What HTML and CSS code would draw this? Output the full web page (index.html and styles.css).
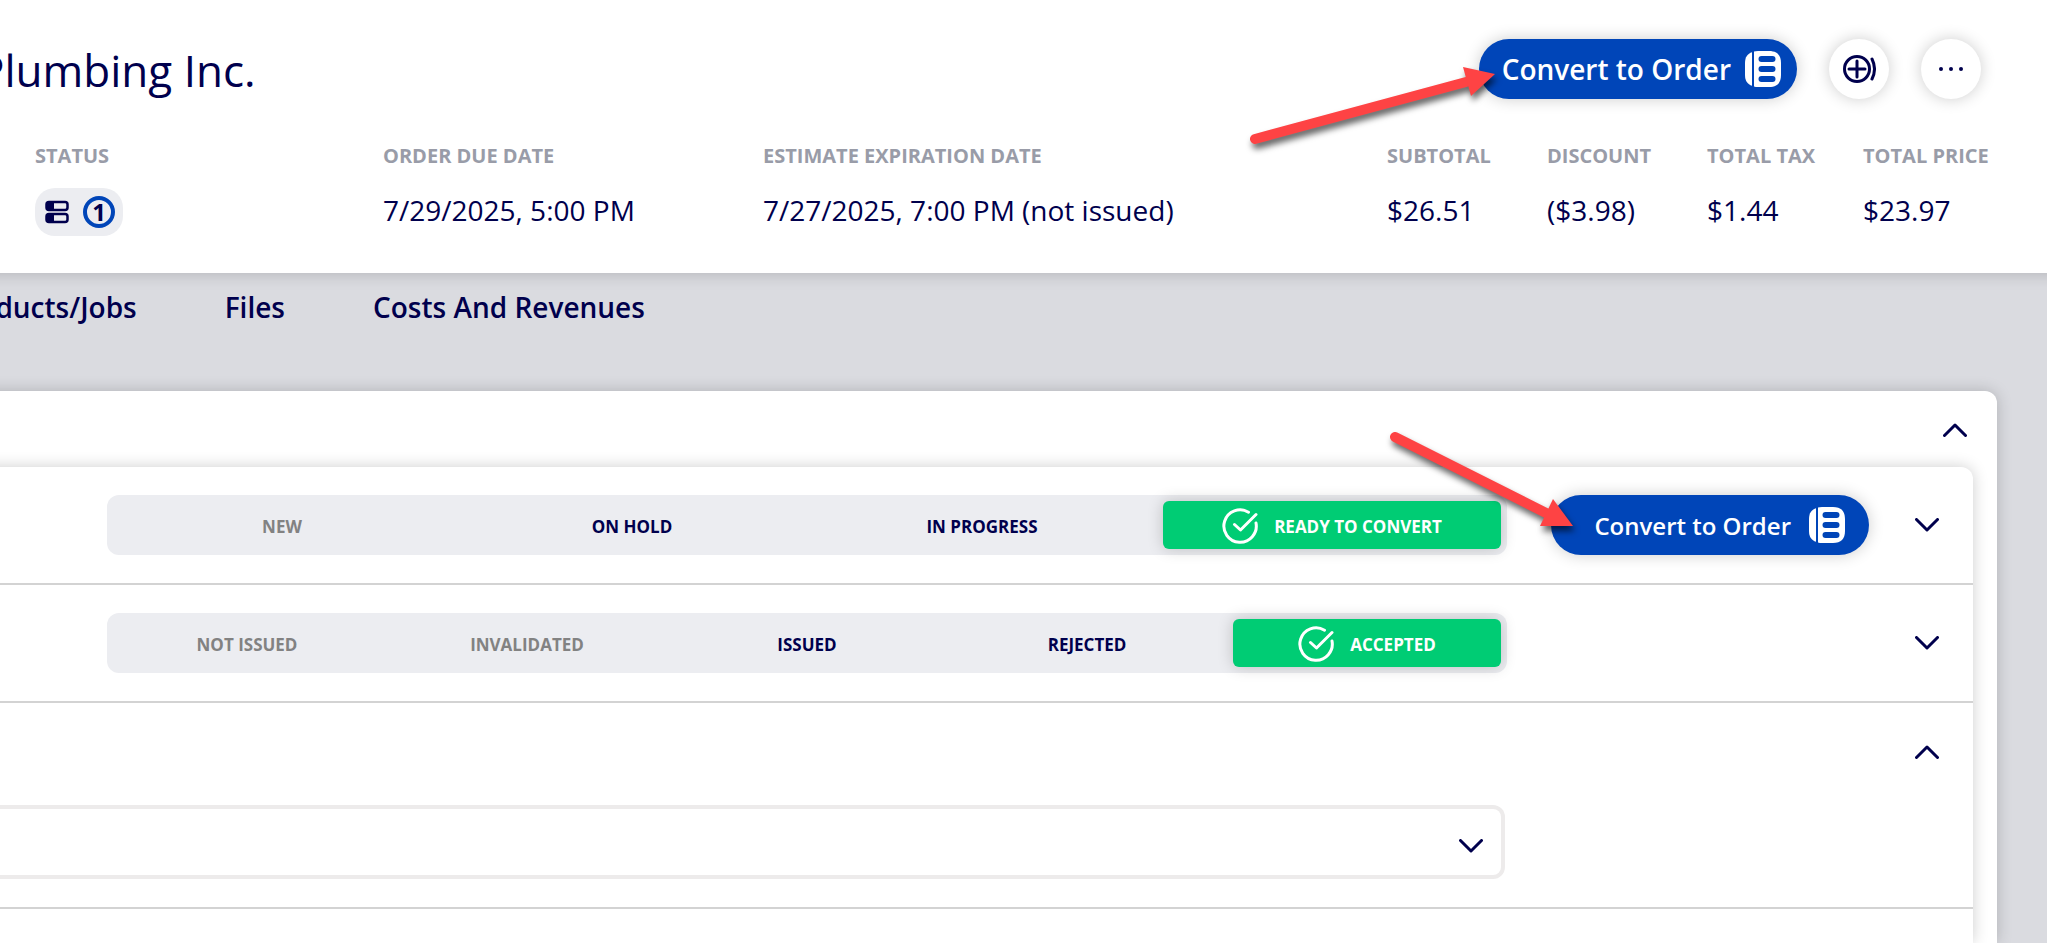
FILE: index.html
```
<!DOCTYPE html>
<html lang="en">
<head>
    <meta charset="UTF-8">
    <meta name="viewport" content="width=device-width, initial-scale=1.0">
    <title>Estimate - Plumbing Inc.</title>
    <link rel="stylesheet" href="styles.css">
</head>
<body>
    <!-- shared icons -->
    <svg class="sprite" aria-hidden="true">
        <symbol id="icon-order" viewBox="0 0 36 36">
            <path fill="#fff" d="M7 1.2V34.8C2.600 33.400 0 30 0 24V12C0 6 2.600 2.600 7 1.200Z"/>
            <path fill="#fff" fill-rule="evenodd" d="M9 .5Q10.500 0 13 0H24C32 0 36 4 36 12V24C36 32 32 36 24 36H13Q10.500 36 9 35.500ZM16.500 5A3 3 0 0 0 16.500 11H27.500A3 3 0 0 0 27.500 5ZM16.500 15A3 3 0 0 0 16.500 21H27.500A3 3 0 0 0 27.500 15ZM16.500 25A3 3 0 0 0 16.500 31H27.500A3 3 0 0 0 27.500 25Z"/>
        </symbol>
        <symbol id="icon-check" viewBox="0 0 36 36">
            <g fill="none" stroke="#fff" stroke-width="3" stroke-linecap="round">
                <path d="M26.500 4.200A16.200 16.200 0 1 0 34 15"/>
                <path stroke-linejoin="round" d="M12.500 16.500L18.500 22L34 6.500"/>
            </g>
        </symbol>
        <symbol id="icon-down" viewBox="0 0 24 14">
            <path fill="none" stroke="#00004d" stroke-width="3" stroke-linecap="round" stroke-linejoin="round" d="M1.500 1.500L12 12L22.500 1.500"/>
        </symbol>
        <symbol id="icon-up" viewBox="0 0 24 14">
            <path fill="none" stroke="#00004d" stroke-width="3" stroke-linecap="round" stroke-linejoin="round" d="M1.500 12.500L12 2L22.500 12.500"/>
        </symbol>
    </svg>

    <header class="header">
        <div class="title-row">
            <h1>Plumbing Inc.</h1>
            <div class="actions">
                <div class="callout">
                    <button type="button" class="btn btn-large">Convert to Order <svg class="icon"><use href="#icon-order"/></svg></button>
                    <svg class="arrow arrow-top" viewBox="0 0 270 100" aria-hidden="true">
                        <path stroke="#fe4344" stroke-width="10" stroke-linecap="round" d="M24 79L235 22"/>
                        <path fill="#fe4344" d="M264 14L232 7L240 36Z"/>
                    </svg>
                </div>
                <button type="button" class="round" aria-label="Add">
                    <svg width="34" height="28" viewBox="0 0 34 28" fill="none" stroke="#00004d" stroke-width="3" stroke-linecap="round">
                        <circle cx="15" cy="14" r="12.500"/>
                        <path d="M15 6V22M7 14H23M30 4Q35 14 30 24"/>
                    </svg>
                </button>
                <button type="button" class="round" aria-label="More">
                    <svg width="24" height="4" viewBox="0 0 24 4" fill="#00004d">
                        <circle cx="2" cy="2" r="2"/>
                        <circle cx="12" cy="2" r="2"/>
                        <circle cx="22" cy="2" r="2"/>
                    </svg>
                </button>
            </div>
        </div>

        <dl class="info">
            <div>
                <dt>STATUS</dt>
                <dd>
                    <span class="status">
                        <svg width="24" height="24" viewBox="0 0 24 24">
                            <rect x="1.500" y="2" width="21" height="8" rx="2.500" fill="none" stroke="#00004d" stroke-width="2.500"/>
                            <rect x="1.500" y="14" width="21" height="8" rx="2.500" fill="none" stroke="#00004d" stroke-width="2.500"/>
                            <path fill="#00004d" d="M2 2H9V10H2ZM2 14H9V22H2Z"/>
                        </svg>
                        <span class="count">1</span>
                    </span>
                </dd>
            </div>
            <div><dt>ORDER DUE DATE</dt><dd>7/29/2025, 5:00 PM</dd></div>
            <div><dt>ESTIMATE EXPIRATION DATE</dt><dd>7/27/2025, 7:00 PM (not issued)</dd></div>
            <div><dt>SUBTOTAL</dt><dd>$26.51</dd></div>
            <div><dt>DISCOUNT</dt><dd>($3.98)</dd></div>
            <div><dt>TOTAL TAX</dt><dd>$1.44</dd></div>
            <div><dt>TOTAL PRICE</dt><dd>$23.97</dd></div>
        </dl>
    </header>

    <nav class="tabs">
        <a href="#products">Products/Jobs</a>
        <a href="#files">Files</a>
        <a href="#costs">Costs And Revenues</a>
    </nav>

    <main class="panel">
        <div class="panel-head">
            <button type="button" class="toggle" aria-label="Collapse"><svg><use href="#icon-up"/></svg></button>
        </div>
        <div class="card">
            <section class="row">
                <div class="track">
                    <button type="button" class="step muted">NEW</button>
                    <button type="button" class="step">ON HOLD</button>
                    <button type="button" class="step">IN PROGRESS</button>
                    <button type="button" class="step active"><svg class="icon"><use href="#icon-check"/></svg>READY TO CONVERT</button>
                </div>
                <div class="callout side">
                    <button type="button" class="btn">Convert to Order <svg class="icon"><use href="#icon-order"/></svg></button>
                    <svg class="arrow arrow-row" viewBox="0 0 200 120" aria-hidden="true">
                        <path stroke="#fe4344" stroke-width="10" stroke-linecap="round" d="M15 17L170 95"/>
                        <path fill="#fe4344" d="M193 106L173 79L160 106Z"/>
                    </svg>
                </div>
                <button type="button" class="toggle" aria-label="Expand"><svg><use href="#icon-down"/></svg></button>
            </section>
            <section class="row">
                <div class="track">
                    <button type="button" class="step muted">NOT ISSUED</button>
                    <button type="button" class="step muted">INVALIDATED</button>
                    <button type="button" class="step">ISSUED</button>
                    <button type="button" class="step">REJECTED</button>
                    <button type="button" class="step active"><svg class="icon"><use href="#icon-check"/></svg>ACCEPTED</button>
                </div>
                <div class="side"></div>
                <button type="button" class="toggle" aria-label="Expand"><svg><use href="#icon-down"/></svg></button>
            </section>
            <section class="row details">
                <div class="select-wrap">
                    <select aria-label="Contact"><option></option></select>
                    <svg class="chevron"><use href="#icon-down"/></svg>
                </div>
                <div class="side"></div>
                <button type="button" class="toggle" aria-label="Collapse"><svg><use href="#icon-up"/></svg></button>
            </section>
        </div>
    </main>
</body>
</html>
```
FILE: styles.css
```
* { box-sizing: border-box; }
body {
    margin: 0;
    min-height: 100vh;
    display: flex;
    flex-direction: column;
    overflow: hidden;
    background: #dadbe0;
    color: #00004d;
    font-family: "Open Sans", sans-serif;
    font-size: 28px;
}
button, select { font-family: inherit; color: inherit; cursor: pointer; }
button { border: 0; padding: 0; background: none; }
.sprite { position: absolute; width: 0; height: 0; }
.icon { width: 36px; height: 36px; }

/* header */
.header {
    height: 273px;
    margin: 0 -20px;
    padding: 39px 20px 0;
    background: #fff;
    box-shadow: 0 0 16px rgba(0, 0, 0, 0.2);
}
.title-row {
    display: flex;
    justify-content: space-between;
    align-items: center;
    height: 60px;
    padding-right: 66px;
}
h1 {
    margin: 0 0 0 -22px;
    padding-top: 2px;
    font-size: 44px;
    font-weight: 400;
    line-height: 60px;
}
.actions { display: flex; gap: 32px; }
.callout { position: relative; }
.btn {
    display: flex;
    align-items: center;
    justify-content: flex-end;
    gap: 18px;
    width: 318px;
    height: 60px;
    padding-right: 24px;
    border-radius: 30px;
    background: #0045b8;
    color: #fff;
    font-size: 24px;
    font-weight: 600;
    white-space: nowrap;
    box-shadow: 0 0 16px rgba(0, 0, 0, 0.2);
}
.btn-large { gap: 14px; padding-right: 16px; font-size: 28px; }
.round {
    display: flex;
    align-items: center;
    justify-content: center;
    width: 60px;
    height: 60px;
    border-radius: 50%;
    background: #fff;
    box-shadow: 0 0 16px rgba(0, 0, 0, 0.2);
}
.arrow {
    position: absolute;
    pointer-events: none;
    filter: drop-shadow(2px 5px 3px rgba(0, 0, 0, 0.6));
}
.arrow-top { width: 270px; height: 100px; left: -248px; top: 21px; }
.arrow-row { width: 200px; height: 120px; left: -171px; top: -75px; }

.info {
    display: grid;
    grid-template-columns: 348px 380px 1fr 160px 160px 156px 125px;
    margin: 40px 59px 0 35px;
    white-space: nowrap;
}
dt {
    color: #999ca8;
    font-size: 20px;
    font-weight: 700;
    line-height: 33px;
}
dd { height: 48px; margin: 16px 0 0; line-height: 44px; }
.status {
    display: inline-flex;
    align-items: center;
    gap: 14px;
    height: 48px;
    padding: 0 8px 0 10px;
    border-radius: 20px;
    background: #ecedf1;
}
.count {
    width: 32px;
    height: 32px;
    border: 4px solid #0045b8;
    border-radius: 50%;
    font-size: 24px;
    font-weight: 700;
    line-height: 24px;
    text-align: center;
}

/* tabs */
.tabs {
    display: flex;
    gap: 88px;
    height: 118px;
    padding-top: 13px;
    margin-left: -51px;
    line-height: 42px;
}
.tabs a { color: inherit; font-weight: 600; text-decoration: none; }

/* panel */
.panel {
    flex: 1;
    display: flex;
    flex-direction: column;
    margin: 0 50px 0 -20px;
    padding-right: 24px;
    border-radius: 0 12px 0 0;
    background: #fff;
    box-shadow: 0 0 16px rgba(0, 0, 0, 0.2);
}
.panel-head {
    display: flex;
    justify-content: flex-end;
    align-items: center;
    height: 76px;
    padding: 2px 6px 0 0;
}
.toggle {
    display: flex;
    align-items: center;
    justify-content: center;
    width: 24px;
    height: 48px;
}
.toggle svg, .chevron { width: 24px; height: 14px; }
.card {
    flex: 1;
    border-radius: 0 12px 0 0;
    box-shadow: 0 0 16px rgba(0, 0, 0, 0.2);
}
.row {
    display: flex;
    align-items: center;
    height: 118px;
    padding: 0 34px 0 127px;
    border-bottom: 2px solid #d3d3d3;
}
.row .toggle { margin-left: 46px; }
.side { width: 318px; margin-left: 44px; }
.track {
    flex: 1;
    display: grid;
    grid-auto-flow: column;
    grid-auto-columns: 1fr;
    height: 60px;
    border-radius: 12px;
    background: #ecedf1;
}
.step {
    padding-top: 2px;
    font-size: 17px;
    font-weight: 700;
}
.muted { color: #828282; }
.active {
    display: flex;
    align-items: center;
    justify-content: center;
    gap: 16px;
    margin: 6px;
    border-radius: 6px;
    background: #00cc74;
    color: #fff;
    box-shadow: 0 0 16px rgba(0, 0, 0, 0.2);
}
.details { height: 206px; padding-left: 0; }
.details .toggle { align-self: flex-start; margin-top: 25px; }
.details .side { margin-left: 46px; }
.select-wrap { position: relative; flex: 1; align-self: flex-end; margin-bottom: 28px; }
.select-wrap select {
    display: block;
    width: 100%;
    height: 74px;
    border: 4px solid #edebeb;
    border-left: 0;
    border-radius: 0 12px 12px 0;
    background: #fff;
    appearance: none;
}
.chevron {
    position: absolute;
    right: 22px;
    top: 34px;
    pointer-events: none;
}
```
